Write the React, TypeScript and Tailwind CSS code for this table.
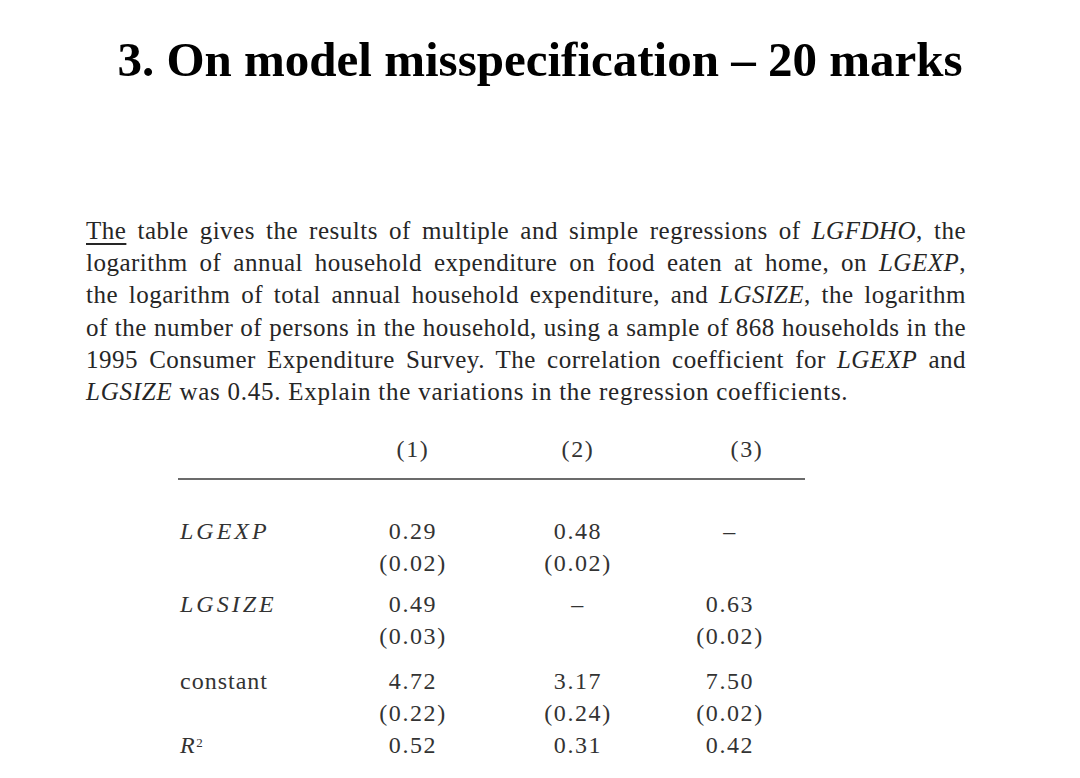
const serif = { fontFamily: '"Liberation Serif", "Times New Roman", serif' };

const lines: React.ReactNode[] = [
  <>
    <span className="underline decoration-2 underline-offset-4">The</span> table gives the results of multiple and simple regressions of <i>LGFDHO</i>, the
  </>,
  <>
    logarithm of annual household expenditure on food eaten at home, on <i>LGEXP</i>,
  </>,
  <>
    the logarithm of total annual household expenditure, and <i>LGSIZE</i>, the logarithm
  </>,
  <>of the number of persons in the household, using a sample of 868 households in the</>,
  <>
    1995 Consumer Expenditure Survey. The correlation coefficient for <i>LGEXP</i> and
  </>,
];

type Row = { label: React.ReactNode; values: [string, string, string]; errors?: [string, string, string]; gap: string };

const rows: Row[] = [
  { label: <i className="tracking-[3px]">LGEXP</i>, values: ["0.29", "0.48", "–"], errors: ["(0.02)", "(0.02)", ""], gap: "mt-[35px]" },
  { label: <i className="tracking-[3px]">LGSIZE</i>, values: ["0.49", "–", "0.63"], errors: ["(0.03)", "", "(0.02)"], gap: "mt-[9px]" },
  { label: <span className="tracking-[1px]">constant</span>, values: ["4.72", "3.17", "7.50"], errors: ["(0.22)", "(0.24)", "(0.02)"], gap: "mt-[13px]" },
  {
    label: (
      <i>
        R<sup className="text-[13px] not-italic">2</sup>
      </i>
    ),
    values: ["0.52", "0.31", "0.42"],
    gap: "mt-0",
  },
];

const cols = "grid grid-cols-[170px_130px_200px_104px]";

export default function App() {
  return (
    <div className="h-[778px] w-[1080px] overflow-hidden bg-white" style={serif}>
      <h1 className="pt-[32px] text-center text-[49px] font-bold leading-[56px] text-black">
        3. On model misspecification – 20 marks
      </h1>

      <div className="ml-[86px] mt-[127px] w-[880px] text-[25px] leading-[32.2px] text-[#262626]">
        {lines.map((l, i) => (
          <div key={i} className="whitespace-nowrap text-justify tracking-[0.5px] [text-align-last:justify]">
            {l}
          </div>
        ))}
        <div className="whitespace-nowrap tracking-[0.75px]">
          <i>LGSIZE</i> was 0.45. Explain the variations in the regression coefficients.
        </div>
      </div>

      <div className="ml-[178px] mt-[25px] w-[627px] text-[24px] leading-[32px] tracking-[1.6px] text-[#333]">
        <div className={cols}>
          <div />
          <div className="text-center">(1)</div>
          <div className="text-center">(2)</div>
          <div className="pl-[34px] text-center">(3)</div>
        </div>
        <div className="mt-[13px] h-[2px] bg-[#6b6b6b]" />

        {rows.map((r, i) => (
          <div key={i} className={r.gap}>
            <div className={cols}>
              <div className="pl-[2px]">{r.label}</div>
              {r.values.map((v, j) => (
                <div key={j} className="text-center">
                  {v}
                </div>
              ))}
            </div>
            {r.errors && (
              <div className={cols}>
                <div />
                {r.errors.map((e, j) => (
                  <div key={j} className="h-[32px] text-center">
                    {e}
                  </div>
                ))}
              </div>
            )}
          </div>
        ))}
      </div>
    </div>
  );
}
